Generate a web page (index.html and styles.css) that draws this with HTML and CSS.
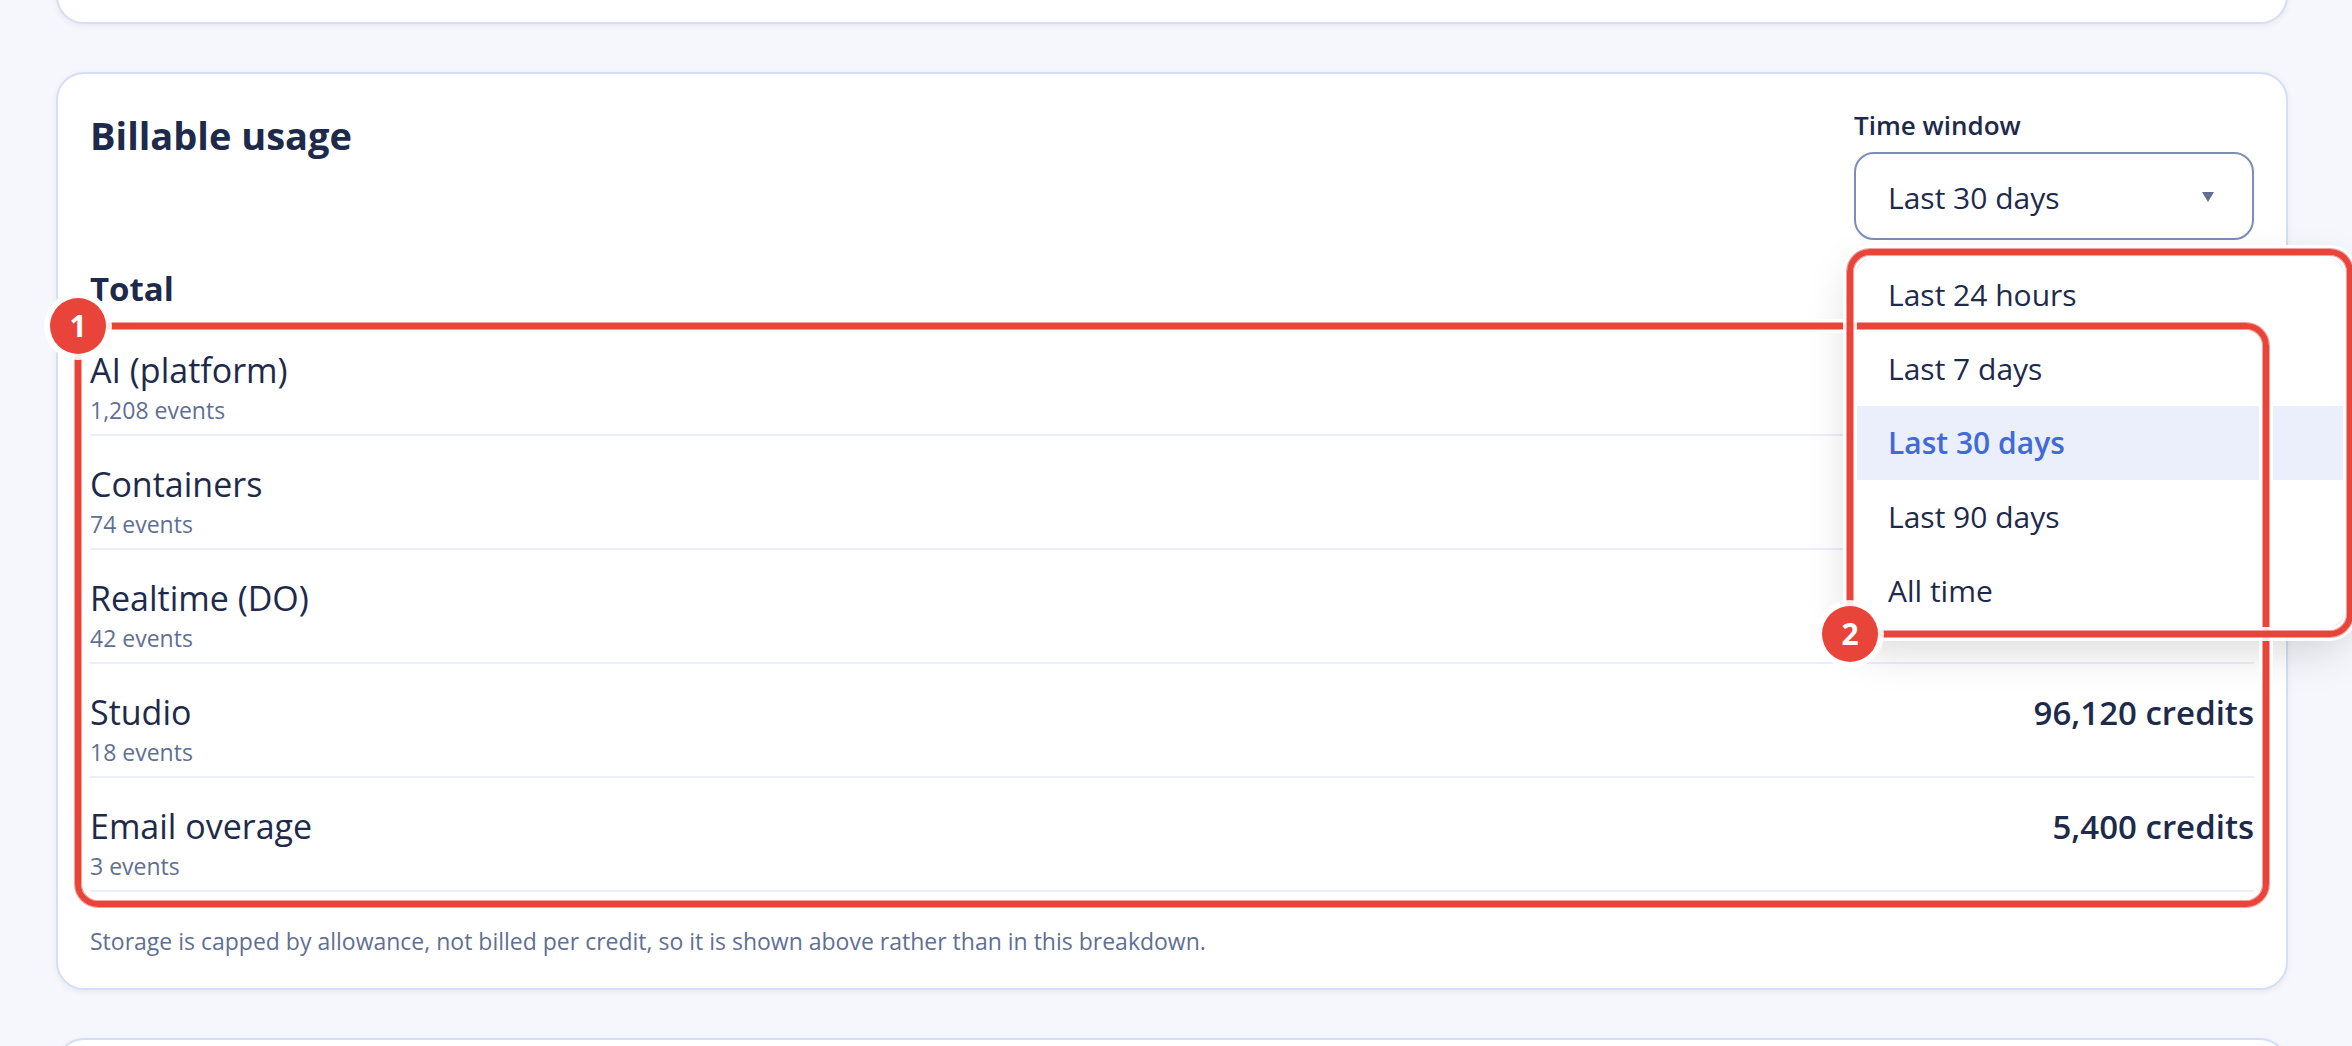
FILE: index.html
```
<!DOCTYPE html>
<html lang="en">
<head>
  <meta charset="UTF-8">
  <meta name="viewport" content="width=device-width, initial-scale=1">
  <title>Billable usage</title>
  <link rel="stylesheet" href="styles.css">
</head>
<body>
  <main class="page">
    <section class="card"></section>

    <section class="card usage">
      <div class="usage-header">
        <h2>Billable usage</h2>
        <div class="field">
          <label for="time-window">Time window</label>
          <div class="select">
            <select id="time-window">
              <option selected>Last 30 days</option>
            </select>
            <svg class="select-arrow" viewBox="0 0 12 10" aria-hidden="true"><path d="M0 0h12L6 10z"/></svg>
          </div>
          <div class="menu">
            <ul class="menu-list" role="listbox" aria-label="Time window">
              <li role="option">Last 24 hours</li>
              <li role="option">Last 7 days</li>
              <li role="option" class="selected" aria-selected="true">Last 30 days</li>
              <li role="option">Last 90 days</li>
              <li role="option">All time</li>
            </ul>
            <div class="callout callout-menu"><span class="badge">2</span></div>
          </div>
        </div>
      </div>

      <h3>Total</h3>

      <div class="breakdown">
        <ul class="rows">
          <li>
            <div class="source">AI (platform)<small>1,208 events</small></div>
          </li>
          <li>
            <div class="source">Containers<small>74 events</small></div>
          </li>
          <li>
            <div class="source">Realtime (DO)<small>42 events</small></div>
          </li>
          <li>
            <div class="source">Studio<small>18 events</small></div>
            <strong>96,120 credits</strong>
          </li>
          <li>
            <div class="source">Email overage<small>3 events</small></div>
            <strong>5,400 credits</strong>
          </li>
        </ul>
        <div class="callout callout-rows"><span class="badge">1</span></div>
      </div>

      <p class="note">Storage is capped by allowance, not billed per credit, so it is shown above rather than in this breakdown.</p>
    </section>

    <section class="card"></section>
  </main>
</body>
</html>
```
FILE: styles.css
```
* {
  box-sizing: border-box;
}
html, body {
  height: 100%;
}
body {
  margin: 0;
  overflow: hidden;
  background: #f6f7fc;
  color: #1e2a4a;
  font-family: "Segoe UI", "Open Sans", sans-serif;
  font-size: 34px;
  line-height: 50px;
}
h2, h3, p, ul {
  margin: 0;
  padding: 0;
}
ul {
  list-style: none;
}

.page {
  display: flex;
  flex-direction: column;
  gap: 48px;
  margin-top: -44px;
  padding: 0 64px 0 56px;
}
.card {
  min-height: 68px;
  padding: 32px;
  background: #fff;
  border: 2px solid #d5def6;
  border-radius: 28px;
  box-shadow: 0 2px 6px rgba(30, 42, 74, 0.07);
}

.usage {
  display: flex;
  flex-direction: column;
  gap: 24px;
}
.usage-header {
  display: flex;
  justify-content: space-between;
  align-items: flex-start;
}
h2 {
  font-size: 38px;
  line-height: 58px;
}
h3 {
  font-size: 33px;
}

/* time window drop-down */
.field {
  position: relative;
  width: 400px;
}
.field label {
  display: block;
  margin-bottom: 8px;
  font-size: 26px;
  font-weight: 600;
  line-height: 38px;
}
.select {
  position: relative;
}
.select select {
  display: block;
  width: 100%;
  height: 88px;
  padding: 2px 32px 0;
  appearance: none;
  background: #fff;
  border: 2px solid #7b8db8;
  border-radius: 20px;
  color: inherit;
  font-family: inherit;
  font-size: 30px;
}
.select-arrow {
  position: absolute;
  top: 40px;
  right: 40px;
  width: 12px;
  height: 10px;
  fill: #5f6f94;
}
.menu {
  position: absolute;
  top: calc(100% + 16px);
  left: 0;
  width: 492px;
}
.menu-list {
  position: relative;
  z-index: 10;
  overflow: hidden;
  background: #fff;
  border: 2px solid #d5def6;
  border-radius: 20px;
  box-shadow: 0 16px 48px rgba(0, 0, 0, 0.18);
  font-size: 30px;
}
.menu-list li {
  padding: 12px 32px;
}
.menu-list .selected {
  background: #ebeffb;
  color: #3f6ad8;
  font-weight: 600;
}

/* billed sources */
.breakdown {
  position: relative;
}
.rows {
  display: flex;
  flex-direction: column;
  gap: 16px;
}
.rows li {
  display: flex;
  justify-content: space-between;
  align-items: baseline;
  height: 98px;
  padding-top: 7px;
  border-bottom: 2px solid #ebeffb;
}
.rows small {
  display: block;
}
.rows strong {
  font-size: 33px;
  font-weight: 600;
}
.rows small,
.note {
  color: #5f6f94;
  font-size: 23px;
  line-height: 30px;
}
.note {
  margin-top: 10px;
}

/* numbered callouts */
.callout {
  position: absolute;
  inset: -15px;
  z-index: 20;
  border: 6px solid #e8443a;
  border-radius: 23px;
  box-shadow:
    0 0 0 1px rgba(232, 68, 58, 0.5),
    inset 0 0 0 1px rgba(232, 68, 58, 0.5),
    0 0 0 4px rgba(255, 255, 255, 0.9),
    inset 0 0 0 4px rgba(255, 255, 255, 0.9);
  pointer-events: none;
}
.callout-menu {
  inset: -7px;
  z-index: 30;
}
.badge {
  position: absolute;
  left: -31px;
  width: 56px;
  height: 56px;
  border-radius: 50%;
  background: #e8443a;
  box-shadow: 0 0 0 6px rgba(255, 255, 255, 0.9);
  color: #fff;
  font-size: 30px;
  font-weight: 700;
  line-height: 56px;
  text-align: center;
}
.callout-rows .badge {
  top: -31px;
}
.callout-menu .badge {
  bottom: -31px;
}
```
